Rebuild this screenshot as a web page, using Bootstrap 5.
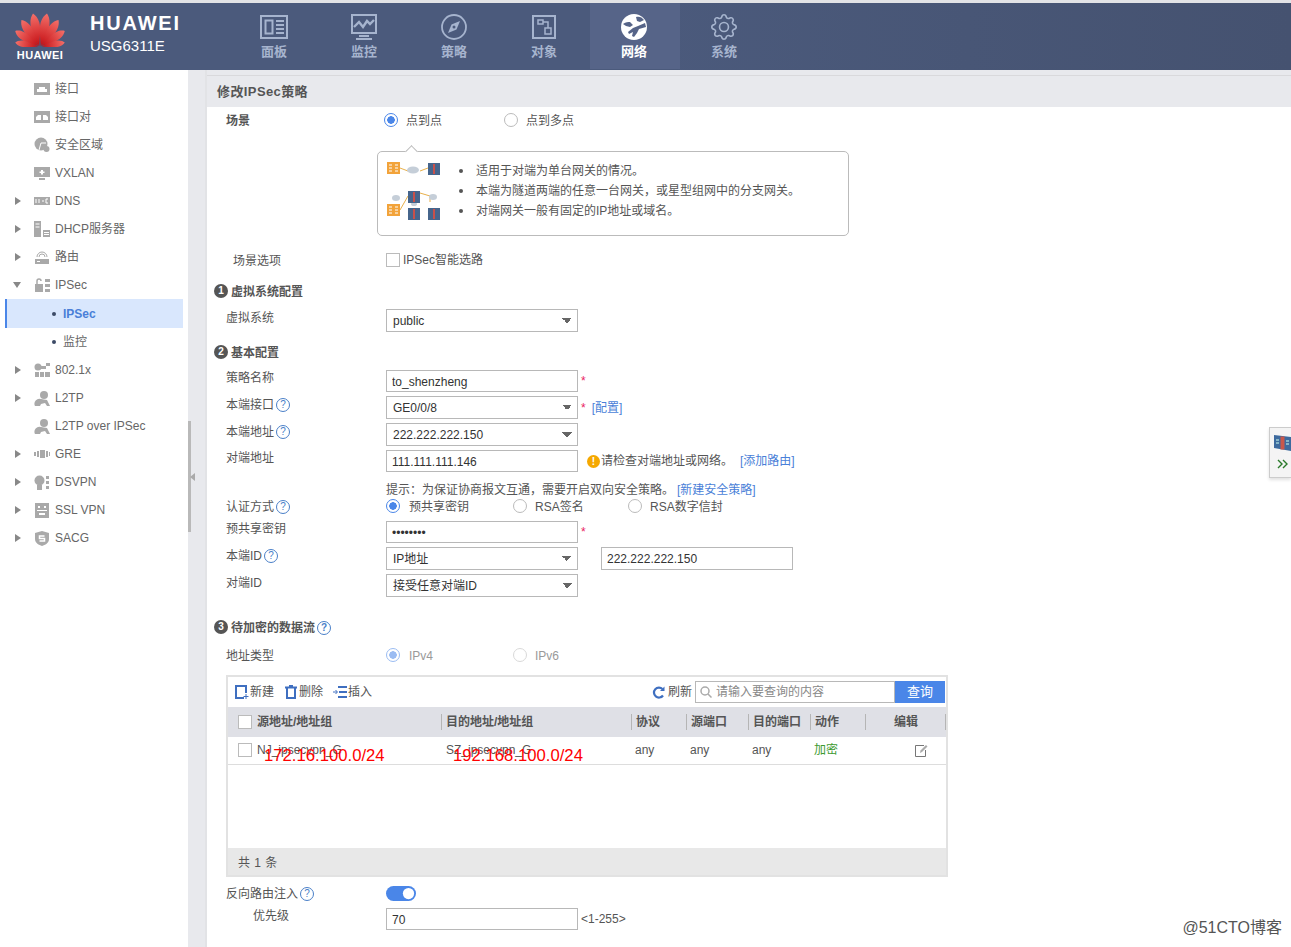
<!DOCTYPE html>
<html lang="zh-CN">
<head>
<meta charset="UTF-8">
<title>USG6311E</title>
<link href="https://cdn.jsdelivr.net/npm/bootstrap@5.3.0/dist/css/bootstrap.min.css" rel="stylesheet">
<style>
html, body { height: 947px; overflow: hidden; }
body { font-family: "Liberation Sans", "Noto Sans CJK SC", sans-serif; font-size: 12px; color: #555; background: #fff; position: relative; }
svg { display: block; flex: none; }

/* top bar */
.topbar { height: 70px; border-top: 3px solid #e2e3e6; background: linear-gradient(90deg, #4b5a7c, #4b5a7c 50%, #455270); }
.brand { width: 230px; padding-left: 10px; }
.logo-box { width: 60px; }
.logo-word { font-size: 11px; font-weight: 700; color: #fff; letter-spacing: .4px; line-height: 11px; margin-top: 3px; }
.brand-name { font-size: 20px; font-weight: 700; color: #fff; letter-spacing: 1.8px; line-height: 22px; margin-top: 9px; }
.brand-model { font-size: 15px; color: #fff; line-height: 20px; margin-top: 2px; }
.brand-text { margin-left: 20px; }
.navcell { width: 90px; height: 66px; color: #a6b4ce; font-size: 13px; font-weight: 700; padding: 11px 2px 0 0; }
.navcell.on { background: #566488; color: #fff; }
.navcell span { margin-top: 4px; line-height: 16px; }
.navicon { height: 26px; }

/* left tree */
.shell { height: 877px; }
.tree { width: 188px; padding-top: 5px; }
.tree ul { margin: 0; padding: 0; list-style: none; }
.titem { height: 28px; padding-left: 15px; display: flex; align-items: center; color: #666; }
.tarrow { width: 19px; }
.tarrow i { display: block; width: 0; height: 0; border-left: 6px solid #888; border-top: 4.5px solid transparent; border-bottom: 4.5px solid transparent; }
.tarrow i.down { border-top: 6px solid #888; border-bottom: 0; border-left: 4.5px solid transparent; border-right: 4.5px solid transparent; margin-left: -2px; }
.ticon { width: 16px; margin-right: 5px; }
.tchild { padding-left: 52px; }
.tchild::before { content: ""; width: 4px; height: 4px; border-radius: 50%; background: #3c4a66; margin-right: 7px; }
.tchild.on { margin: 0 5px; padding-left: 45px; height: 29px; background: #d9e7fd; border-left: 2px solid #4a86e8; color: #4a7fd8; font-weight: 700; }
.gutter { width: 17px; background: #e8e9ed; position: relative; }
.gutter-bar { position: absolute; left: 0; top: 351px; width: 3px; height: 111px; background: #b9b9b9; }
.gutter-tip { position: absolute; left: 2px; top: 403px; border-right: 5px solid #aaa; border-top: 4px solid transparent; border-bottom: 4px solid transparent; }

/* main form */
.mainpane { border-left: 2px solid #e2e3e6; background: linear-gradient(#e8e9ed 5px, #fff 5px); flex: 1; padding-top: 5px; min-width: 0; }
.panehead { height: 32px; background: #e8e9ed; border-top: 1px solid #d9d9dc; padding-left: 10px; font-size: 13px; font-weight: 700; color: #555; letter-spacing: .4px; }
.frow { display: flex; align-items: center; padding-left: 19px; height: 23px; margin-top: 4px; }
.flabel { width: 160px; flex: none; display: flex; align-items: center; gap: 2px; padding-top: 2px; }
.flabel.lift { margin-bottom: 8px; }
.h16 { height: 16px; } .h18 { height: 18px; } .h20 { height: 20px; } .h22 { height: 22px; }
.m1 { margin-top: 1px; } .m3 { margin-top: 3px; } .m6 { margin-top: 6px; } .m7 { margin-top: 7px; } .m8 { margin-top: 8px; } .m9 { margin-top: 9px; } .m10 { margin-top: 10px; } .m12 { margin-top: 12px; } .m15 { margin-top: 15px; } .m20 { margin-top: 20px; }
.secrow { padding-left: 7px; padding-top: 2px; height: 20px; font-weight: 700; color: #555; }
.secnum { width: 14px; height: 14px; border-radius: 50%; background: #555; color: #fff; font-size: 10px; line-height: 14px; text-align: center; margin: -2px 3px 0 0; flex: none; }
.helpq { width: 14px; height: 14px; border: 1px solid #4a7fc8; border-radius: 50%; color: #4a7fc8; font-size: 10px; line-height: 12px; text-align: center; flex: none; }
.sechelp { margin-left: 2px; }
.boldlab { font-weight: 700; }
.indent7 { padding-left: 7px; }
.indent27 { padding-left: 27px; }

.form-control.fbox, .form-select.fbox { width: 192px; height: 100%; min-height: 0; flex: none; border: 1px solid #b8b8b8; border-radius: 0; font-size: 12px; color: #333; padding: 1px 5px 0; box-shadow: none; }
.form-select.fbox { padding: 0 6px; background-image: linear-gradient(45deg, transparent 50%, #666 50%), linear-gradient(135deg, #666 50%, transparent 50%); background-size: 5px 5px, 5px 5px; background-position: right 10px center, right 5px center; background-repeat: no-repeat; }
.form-control.fbox.second { margin-left: 23px; }
.req { color: #e91e63; margin: 0 6px 0 3px; }
.lnk { color: #4a7fd8; text-decoration: none; }
.lnk.after-warn { margin-left: 7px; }
.lnk.after-hint { margin-left: 3px; }
.warnico { width: 13px; height: 13px; border-radius: 50%; background: #f5a800; color: #fff; font-weight: 700; font-size: 10px; line-height: 13px; text-align: center; margin: 0 1px 0 9px; flex: none; }
.hinttext { padding-top: 2px; }
.rng { margin-left: 3px; font-size: 12px; color: #555; }

.rdo { display: inline-flex; align-items: center; gap: 8px; padding-top: 2px; }
.rdo .form-check-input { width: 14px; height: 14px; margin: -2px 0 0; border: 1px solid #bbb; background-color: #fff; background-image: none; flex: none; box-shadow: none; }
.rdo .form-check-input:checked { border-color: #4a86e8; background-image: radial-gradient(circle, #4a86e8 0, #4a86e8 3.5px, #fff 4px); }
.rdo .form-check-input:disabled { opacity: .55; }
.w120 { width: 120px; } .w127 { width: 127px; gap: 9px; } .w115 { width: 115px; }
.scene-radios { margin-left: -2px; }
.dim { color: #999; }
.form-check-input.chkbox { width: 14px; height: 14px; margin: 0 3px 0 0; border: 1px solid #bbb; border-radius: 0; flex: none; box-shadow: none; }

.tipbox { margin: 21px 0 0 170px; width: 472px; height: 85px; border: 1px solid #bbb; border-radius: 5px; position: relative; padding: 8px 0 0 9px; }
.tipbox::before { content: ""; position: absolute; left: 29px; top: -5px; width: 9px; height: 9px; background: #fff; border-left: 1px solid #bbb; border-top: 1px solid #bbb; transform: rotate(45deg); }
.tipbox ul { margin: 1px 0 0 18px; padding: 0; list-style: none; }
.tipbox li { line-height: 20px; color: #555; padding-left: 17px; position: relative; }
.tipbox li::before { content: ""; position: absolute; left: 0; top: 8px; width: 4px; height: 4px; border-radius: 50%; background: #555; }

/* data flow table */
.flowbox { margin: 10px 0 0 19px; width: 722px; height: 202px; border: 2px solid #e2e2e2; display: flex; flex-direction: column; }
.flowtools { height: 30px; padding: 0 1px 0 7px; flex: none; }
.tbtn { display: inline-flex; align-items: center; gap: 1px; margin-right: 10px; color: #555; }
.tbtn.refresh { margin: 0 3px 0 auto; gap: 3px; }
.searchbox { width: 200px; height: 22px; border: 1px solid #b8b8b8; display: flex; align-items: center; gap: 4px; padding-left: 4px; color: #888; }
.querybtn { width: 50px; height: 22px; padding: 0; border: 0; border-radius: 0; background: #4a86e8; color: #fff; font-size: 13px; }
.flowtable { width: 718px; table-layout: fixed; margin: 0; flex: none; }
.flowtable th, .flowtable td { padding: 0 0 0 5px; vertical-align: middle; font-size: 12px; color: #555; box-shadow: none; }
.flowtable th { height: 30px; background: #dfe0e6; border: 0; position: relative; }
.flowtable th + th::before { content: ""; position: absolute; left: 0; top: 7px; height: 16px; width: 1px; background: #b5b5b5; }
.flowtable td { height: 27px; border-bottom: 1px solid #ddd; }
.flowtable td:nth-child(n+3) { padding-left: 4px; }
.flowtable .firstcell { padding-left: 10px; }
.flowtable th.lastcell { text-align: center; padding-right: 4px; }
.flowtable th.lastcell::after { content: ""; position: absolute; right: 0; top: 7px; height: 16px; width: 1px; background: #b5b5b5; }
.flowtable td.enc { color: #3d9a2f; }
.form-check-input.chkbox.cellchk { margin: 0 5px 0 0; }
.cw1 { width: 213px; } .cw2 { width: 190px; } .cw3 { width: 55px; } .cw4 { width: 62px; } .cw5 { width: 81px; }
.editico { margin-left: 46px; }
.redmark { position: absolute; color: #f00; font-size: 16.700px; line-height: 20px; white-space: nowrap; }
.redmark.a { left: 264px; top: 746px; }
.redmark.b { left: 453px; top: 746px; }
.flowfoot { margin-top: auto; height: 27px; background: #e8e8e8; padding: 2px 0 0 10px; letter-spacing: .5px; flex: none; }
.form-switch .form-check-input.swt { width: 30px; height: 15px; margin: 0; background-color: #4a86e8; border: 0; box-shadow: none; }

/* right side dock + watermark */
.dock { position: absolute; right: 0; top: 427px; width: 22px; height: 51px; background: #f4f4f4; border: 1px solid #ccc; border-right: 0; box-shadow: 0 2px 3px rgba(0,0,0,.12); padding: 7px 0 0 4px; }
.dock-arrows { margin: 8px 0 0 3px; }
.watermark { position: absolute; right: 9px; top: 917px; font-size: 16px; line-height: 22px; color: #555; background: rgba(255,255,255,.7); }
</style>
</head>
<body>

<header class="topbar d-flex">
  <div class="brand d-flex">
    <div class="logo-box d-flex flex-column align-items-center">
      <svg width="50" height="36" viewBox="0 0 50 36" class="mt-2">
        <defs><linearGradient id="petal" x1="0" y1="0" x2="0" y2="1"><stop offset="0" stop-color="#f4706a"/><stop offset="1" stop-color="#c40d12"/></linearGradient></defs>
        <g fill="url(#petal)">
          <path transform="translate(24.300 35) rotate(-11)" d="M0 0C-2-8-5-17-4.500-23C-4-28-2-31 0-33C2-31 4-28 4.500-23C5-17 2-8 0 0Z"/>
          <path transform="translate(25.700 35) rotate(11)" d="M0 0C-2-8-5-17-4.500-23C-4-28-2-31 0-33C2-31 4-28 4.500-23C5-17 2-8 0 0Z"/>
          <path transform="translate(24 35) rotate(-34) scale(.95)" d="M0 0C-2-8-5-17-4.500-23C-4-28-2-31 0-33C2-31 4-28 4.500-23C5-17 2-8 0 0Z"/>
          <path transform="translate(26 35) rotate(34) scale(.95)" d="M0 0C-2-8-5-17-4.500-23C-4-28-2-31 0-33C2-31 4-28 4.500-23C5-17 2-8 0 0Z"/>
          <path transform="translate(23.500 35) rotate(-57) scale(.84)" d="M0 0C-2-8-5-17-4.500-23C-4-28-2-31 0-33C2-31 4-28 4.500-23C5-17 2-8 0 0Z"/>
          <path transform="translate(26.500 35) rotate(57) scale(.84)" d="M0 0C-2-8-5-17-4.500-23C-4-28-2-31 0-33C2-31 4-28 4.500-23C5-17 2-8 0 0Z"/>
          <path transform="translate(23 35.500) rotate(-80) scale(.7)" d="M0 0C-2-8-5-17-4.500-23C-4-28-2-31 0-33C2-31 4-28 4.500-23C5-17 2-8 0 0Z"/>
          <path transform="translate(27 35.500) rotate(80) scale(.7)" d="M0 0C-2-8-5-17-4.500-23C-4-28-2-31 0-33C2-31 4-28 4.500-23C5-17 2-8 0 0Z"/>
        </g>
      </svg>
      <div class="logo-word">HUAWEI</div>
    </div>
    <div class="brand-text">
      <div class="brand-name">HUAWEI</div>
      <div class="brand-model">USG6311E</div>
    </div>
  </div>
  <nav class="d-flex">
    <div class="navcell d-flex flex-column align-items-center">
      <svg class="navicon" width="28" height="26" viewBox="0 0 28 26" fill="none" stroke="#a6b4ce" stroke-width="2"><rect x="1" y="2" width="26" height="22"/><rect x="5.500" y="6.500" width="7" height="13"/><path d="M16 7h8M16 11h8M16 15h8M16 19h8"/></svg>
      <span>面板</span>
    </div>
    <div class="navcell d-flex flex-column align-items-center">
      <svg class="navicon" width="28" height="26" viewBox="0 0 28 26" fill="none" stroke="#a6b4ce" stroke-width="2"><rect x="2" y="1" width="24" height="18"/><path d="M4 13l5-5 4 5 4-6 3 3 4-4" stroke-width="2.400"/><path d="M9 22h10M6 25h16"/></svg>
      <span>监控</span>
    </div>
    <div class="navcell d-flex flex-column align-items-center">
      <svg class="navicon" width="26" height="26" viewBox="0 0 26 26" fill="none" stroke="#a6b4ce" stroke-width="1.800"><circle cx="13" cy="13" r="12"/><path d="M19 7l-8.500 3.500L7 19l8.500-3.500Z" fill="#a6b4ce" stroke="none"/><circle cx="13" cy="13" r="1.500" fill="#4b5a7c" stroke="none"/></svg>
      <span>策略</span>
    </div>
    <div class="navcell d-flex flex-column align-items-center">
      <svg class="navicon" width="26" height="26" viewBox="0 0 26 26" fill="none" stroke="#a6b4ce" stroke-width="2"><rect x="2" y="2" width="22" height="22"/><rect x="7" y="6" width="5" height="4" stroke-width="1.500"/><rect x="14" y="14" width="6" height="6" stroke-width="1.500"/><path d="M12 8h5v6" stroke-width="1.500"/></svg>
      <span>对象</span>
    </div>
    <div class="navcell on d-flex flex-column align-items-center">
      <svg class="navicon" width="26" height="26" viewBox="0 0 26 26"><circle cx="13" cy="13" r="13" fill="#fff"/><path d="M2 10c3-2 5-2 7-2l3 3-3 2-4-1ZM15 3c3-1 6 0 8 3l-4 2-3-1ZM7 18l5-4 5-2 7-3 1 4-7 2-2 4-3 4-2-1 1-4-4 2Z" fill="#566488"/></svg>
      <span>网络</span>
    </div>
    <div class="navcell d-flex flex-column align-items-center">
      <svg class="navicon" width="26" height="26" viewBox="0 0 16 16" fill="#a6b4ce"><path d="M8 4.754a3.246 3.246 0 1 0 0 6.492 3.246 3.246 0 0 0 0-6.492zM5.754 8a2.246 2.246 0 1 1 4.492 0 2.246 2.246 0 0 1-4.492 0z"/><path d="M9.796 1.343c-.527-1.790-3.065-1.790-3.592 0l-.094.319a.873.873 0 0 1-1.255.520l-.292-.160c-1.640-.892-3.433.902-2.540 2.541l.159.292a.873.873 0 0 1-.520 1.255l-.319.094c-1.790.527-1.790 3.065 0 3.592l.319.094a.873.873 0 0 1 .520 1.255l-.160.292c-.892 1.640.901 3.434 2.541 2.540l.292-.159a.873.873 0 0 1 1.255.520l.094.319c.527 1.790 3.065 1.790 3.592 0l.094-.319a.873.873 0 0 1 1.255-.520l.292.160c1.640.893 3.434-.902 2.540-2.541l-.159-.292a.873.873 0 0 1 .520-1.255l.319-.094c1.790-.527 1.790-3.065 0-3.592l-.319-.094a.873.873 0 0 1-.520-1.255l.160-.292c.893-1.640-.902-3.433-2.541-2.540l-.292.159a.873.873 0 0 1-1.255-.520l-.094-.319zm-2.633.283c.246-.835 1.428-.835 1.674 0l.094.319a1.873 1.873 0 0 0 2.693 1.115l.291-.160c.764-.415 1.600.420 1.184 1.185l-.159.292a1.873 1.873 0 0 0 1.116 2.692l.318.094c.835.246.835 1.428 0 1.674l-.319.094a1.873 1.873 0 0 0-1.115 2.693l.160.291c.415.764-.420 1.600-1.185 1.184l-.291-.159a1.873 1.873 0 0 0-2.693 1.116l-.094.318c-.246.835-1.428.835-1.674 0l-.094-.319a1.873 1.873 0 0 0-2.692-1.115l-.292.160c-.764.415-1.600-.420-1.184-1.185l.159-.291A1.873 1.873 0 0 0 1.945 8.930l-.319-.094c-.835-.246-.835-1.428 0-1.674l.319-.094A1.873 1.873 0 0 0 3.060 4.377l-.160-.292c-.415-.764.420-1.600 1.185-1.184l.292.159a1.873 1.873 0 0 0 2.692-1.115l.094-.319z"/></svg>
      <span>系统</span>
    </div>
  </nav>
</header>

<div class="shell d-flex">
  <aside class="tree">
    <ul>
      <li class="titem"><span class="tarrow"></span><svg class="ticon" width="16" height="12" viewBox="0 0 16 12"><path fill="#a9a9a9" d="M0 0h16v12H0Z"/><path fill="#fff" d="M3 9V6h2V4h6v2h2v3Z"/></svg>接口</li>
      <li class="titem"><span class="tarrow"></span><svg class="ticon" width="16" height="12" viewBox="0 0 16 12"><path fill="#a9a9a9" d="M0 0h16v12H0Z"/><path fill="#fff" d="M2 9V6l2-2h3v5ZM9 9V4h3l2 2v3Z"/></svg>接口对</li>
      <li class="titem"><span class="tarrow"></span><svg class="ticon" width="16" height="16" viewBox="0 0 16 16"><circle cx="7" cy="7" r="6.500" fill="#a9a9a9"/><path d="M5 13l2-7h5" fill="none" stroke="#fff"/><circle cx="12.500" cy="12" r="3" fill="#a9a9a9"/></svg>安全区域</li>
      <li class="titem"><span class="tarrow"></span><svg class="ticon" width="16" height="13" viewBox="0 0 16 13"><path fill="#a9a9a9" d="M0 0h16v10H0ZM5 11h6v2H5Z"/><path fill="#fff" d="M7 3h2v1.500h1.500v1.500H9v1.500H7V6H5.500V4.500H7Z"/></svg>VXLAN</li>
      <li class="titem"><span class="tarrow"><i></i></span><svg class="ticon" width="16" height="8" viewBox="0 0 16 8"><path fill="#a9a9a9" d="M0 0h16v8H0Z"/><path stroke="#fff" d="M2 2v4M5 2v4M8 4h2M12 2h2M12 6h2M12 2v4" fill="none"/></svg>DNS</li>
      <li class="titem"><span class="tarrow"><i></i></span><svg class="ticon" width="16" height="16" viewBox="0 0 16 16"><path fill="#a9a9a9" d="M0 0h7v16H0ZM9 9h7v7H9Z"/><path stroke="#fff" d="M1.500 3h4M1.500 6h4M10 11.500h5M10 13.500h5"/></svg>DHCP服务器</li>
      <li class="titem"><span class="tarrow"><i></i></span><svg class="ticon" width="16" height="14" viewBox="0 0 16 14"><path fill="#a9a9a9" d="M1 9h14v5H1Z"/><path stroke="#a9a9a9" fill="none" d="M3 7a5 5 0 0 1 10 0M5 7a3 3 0 0 1 6 0"/><path stroke="#fff" d="M3 11.500h3"/></svg>路由</li>
      <li class="titem"><span class="tarrow"><i class="down"></i></span><svg class="ticon" width="16" height="14" viewBox="0 0 16 14"><path fill="#a9a9a9" d="M1 6h8v8H1ZM11 1h5v3h-5ZM11 6h5v3h-5ZM11 11h5v3h-5Z"/><path fill="none" stroke="#a9a9a9" stroke-width="1.500" d="M3 6V3a2 2 0 0 1 4 0"/></svg>IPSec</li>
      <li class="titem tchild on">IPSec</li>
      <li class="titem tchild">监控</li>
      <li class="titem"><span class="tarrow"><i></i></span><svg class="ticon" width="16" height="14" viewBox="0 0 16 14"><circle cx="4" cy="4" r="3.500" fill="#a9a9a9"/><path fill="#a9a9a9" d="M6 3h6v3H6ZM12 0h4v3h-4ZM1 9h4v5H1ZM6 9h4v5H6ZM11 9h5v5h-5Z"/></svg>802.1x</li>
      <li class="titem"><span class="tarrow"><i></i></span><svg class="ticon" width="16" height="15" viewBox="0 0 16 15"><circle cx="10" cy="4" r="4" fill="#a9a9a9"/><path fill="#a9a9a9" d="M1 15a5 5 0 0 1 6-7l6 1 3 6h-3l-2-3-4 1-1 2Z"/></svg>L2TP</li>
      <li class="titem"><span class="tarrow"></span><svg class="ticon" width="16" height="15" viewBox="0 0 16 15"><circle cx="10" cy="4" r="4" fill="#a9a9a9"/><path fill="#a9a9a9" d="M1 15a5 5 0 0 1 6-7l6 1 3 6h-3l-2-3-4 1-1 2Z"/></svg>L2TP over IPSec</li>
      <li class="titem"><span class="tarrow"><i></i></span><svg class="ticon" width="16" height="8" viewBox="0 0 16 8"><path fill="#a9a9a9" d="M0 2h2v4H0ZM3 1h2v6H3ZM6 0h5v8H6ZM12 1h2v6h-2ZM15 2h1v4h-1Z"/></svg>GRE</li>
      <li class="titem"><span class="tarrow"><i></i></span><svg class="ticon" width="16" height="15" viewBox="0 0 16 15"><circle cx="5.500" cy="5.500" r="5" fill="#a9a9a9"/><path fill="#a9a9a9" d="M3 10h5v5H3ZM12 1h3v3h-3ZM12 6h3v3h-3ZM12 11h3v3h-3Z"/></svg>DSVPN</li>
      <li class="titem"><span class="tarrow"><i></i></span><svg class="ticon" width="14" height="15" viewBox="0 0 14 15"><path fill="#a9a9a9" d="M0 0h14v15H0Z"/><path fill="#fff" d="M3 3h2v2H3ZM9 3h2v2H9ZM2 7h10v1H2ZM4 10h6v2H4Z"/></svg>SSL VPN</li>
      <li class="titem"><span class="tarrow"><i></i></span><svg class="ticon" width="14" height="15" viewBox="0 0 14 15"><path fill="#a9a9a9" d="M7 0l7 2v6c0 4-4 6-7 7-3-1-7-3-7-7V2Z"/><path fill="none" stroke="#fff" stroke-width="1.500" d="M9.500 5h-5v2.500h5V10h-5"/></svg>SACG</li>
    </ul>
  </aside>
  <div class="gutter"><div class="gutter-bar"></div><div class="gutter-tip"></div></div>

  <main class="mainpane">
    <div class="panehead d-flex align-items-center">修改IPSec策略</div>

    <div class="frow h20 m3">
      <div class="flabel boldlab">场景</div>
      <div class="scene-radios d-flex">
        <label class="rdo w120"><input class="form-check-input" type="radio" name="scene" checked>点到点</label>
        <label class="rdo"><input class="form-check-input" type="radio" name="scene">点到多点</label>
      </div>
    </div>

    <div class="tipbox d-flex">
      <svg width="54" height="60" viewBox="0 0 54 60">
        <g stroke="#e8b04a" fill="none"><path d="M13 8l8 3M33 11l8-3M13 50l8-14 10-3M33 33l10 3 0 6"/></g>
        <g fill="#c5ced8"><ellipse cx="26" cy="10" rx="6" ry="3.500"/><ellipse cx="9" cy="38" rx="4" ry="3"/><ellipse cx="46" cy="37" rx="4" ry="3"/><ellipse cx="27" cy="44" rx="3" ry="2"/></g>
        <g fill="#f2a33a"><rect x="0" y="2" width="13" height="12"/><rect x="0" y="44" width="13" height="12"/></g>
        <g fill="#46658c"><rect x="41" y="3" width="12" height="12"/><rect x="21" y="31" width="12" height="12"/><rect x="21" y="48" width="12" height="12"/><rect x="41" y="48" width="12" height="12"/></g>
        <path stroke="#fff" d="M2 5h3M2 8h3M2 11h3M8 5h3M8 8h3M8 11h3M2 47h3M2 50h3M2 53h3M8 47h3M8 50h3M8 53h3"/>
        <path stroke="#c8504a" stroke-width="2" d="M47 4v10M27 32v10M27 49v10M47 49v10"/>
      </svg>
      <ul>
        <li>适用于对端为单台网关的情况。</li>
        <li>本端为隧道两端的任意一台网关，或星型组网中的分支网关。</li>
        <li>对端网关一般有固定的IP地址或域名。</li>
      </ul>
    </div>

    <div class="frow h18 m15">
      <div class="flabel indent7">场景选项</div>
      <label class="d-flex align-items-center"><input class="form-check-input chkbox" type="checkbox">IPSec智能选路</label>
    </div>

    <div class="frow secrow m12"><span class="secnum">1</span>虚拟系统配置</div>
    <div class="frow m8">
      <div class="flabel lift">虚拟系统</div>
      <select class="form-select fbox"><option>public</option></select>
    </div>

    <div class="frow secrow m10"><span class="secnum">2</span>基本配置</div>
    <div class="frow h22 m8">
      <div class="flabel lift">策略名称</div>
      <input class="form-control fbox" value="to_shenzheng"><span class="req">*</span>
    </div>
    <div class="frow">
      <div class="flabel lift">本端接口<span class="helpq">?</span></div>
      <select class="form-select fbox"><option>GE0/0/8</option></select><span class="req">*</span><a class="lnk">[配置]</a>
    </div>
    <div class="frow">
      <div class="flabel lift">本端地址<span class="helpq">?</span></div>
      <select class="form-select fbox"><option>222.222.222.150</option></select>
    </div>
    <div class="frow h22">
      <div class="flabel lift">对端地址</div>
      <input class="form-control fbox" value="111.111.111.146"><span class="warnico">!</span><span>请检查对端地址或网络。</span><a class="lnk after-warn">[添加路由]</a>
    </div>
    <div class="frow h16 m9">
      <div class="flabel"></div>
      <span class="hinttext">提示：为保证协商报文互通，需要开启双向安全策略。</span><a class="lnk after-hint hinttext">[新建安全策略]</a>
    </div>
    <div class="frow h16 m1">
      <div class="flabel">认证方式<span class="helpq">?</span></div>
      <label class="rdo w127"><input class="form-check-input" type="radio" name="auth" checked>预共享密钥</label>
      <label class="rdo w115"><input class="form-check-input" type="radio" name="auth">RSA签名</label>
      <label class="rdo"><input class="form-check-input" type="radio" name="auth">RSA数字信封</label>
    </div>
    <div class="frow h22 m7">
      <div class="flabel lift">预共享密钥</div>
      <input class="form-control fbox" type="password" value="password"><span class="req">*</span>
    </div>
    <div class="frow">
      <div class="flabel lift">本端ID<span class="helpq">?</span></div>
      <select class="form-select fbox"><option>IP地址</option></select>
      <input class="form-control fbox second" value="222.222.222.150">
    </div>
    <div class="frow">
      <div class="flabel lift">对端ID</div>
      <select class="form-select fbox"><option>接受任意对端ID</option></select>
    </div>

    <div class="frow secrow m20"><span class="secnum">3</span>待加密的数据流<span class="helpq sechelp">?</span></div>
    <div class="frow h20 m8">
      <div class="flabel">地址类型</div>
      <label class="rdo w127 dim"><input class="form-check-input" type="radio" name="ipv" checked disabled>IPv4</label>
      <label class="rdo dim"><input class="form-check-input" type="radio" name="ipv" disabled>IPv6</label>
    </div>

    <section class="flowbox">
      <div class="flowtools d-flex align-items-center">
        <span class="tbtn"><svg width="14" height="14" viewBox="0 0 14 14" fill="none" stroke="#3f6fc0" stroke-width="2"><path d="M9 13H1V1h10v7"/><path d="M11 9v5M8.500 11.500h5" stroke-width="1"/></svg>新建</span>
        <span class="tbtn"><svg width="14" height="14" viewBox="0 0 14 14" fill="none" stroke="#3f6fc0" stroke-width="2"><path d="M1 2.500h12M5 1h4M3 3v10h8V3"/></svg>删除</span>
        <span class="tbtn"><svg width="14" height="12" viewBox="0 0 14 12" stroke="#3f6fc0" fill="none"><path d="M5 1h9M5 11h9" stroke-width="2"/><path d="M6 6h8" stroke-width="2"/><path d="M0 6h4M2.500 4l2 2-2 2"/></svg>插入</span>
        <span class="tbtn refresh"><svg width="13" height="13" viewBox="0 0 13 13" fill="none" stroke="#3f6fc0" stroke-width="2.200"><path d="M11 9.500A5 5 0 1 1 10.500 3"/><path d="M12.500 0.500v4.500h-4.500z" fill="#3f6fc0" stroke="none"/></svg>刷新</span>
        <div class="searchbox"><svg width="12" height="12" viewBox="0 0 12 12" fill="none" stroke="#aaa" stroke-width="1.500"><circle cx="5" cy="5" r="4"/><path d="M8 8l3.500 3.500"/></svg>请输入要查询的内容</div>
        <button type="button" class="btn querybtn">查询</button>
      </div>
      <table class="table flowtable">
        <colgroup><col class="cw1"><col class="cw2"><col class="cw3"><col class="cw4"><col class="cw4"><col class="cw3"><col class="cw5"></colgroup>
        <thead><tr>
          <th class="firstcell"><div class="d-flex align-items-center"><input class="form-check-input chkbox cellchk" type="checkbox">源地址/地址组</div></th>
          <th>目的地址/地址组</th><th>协议</th><th>源端口</th><th>目的端口</th><th>动作</th><th class="lastcell">编辑</th>
        </tr></thead>
        <tbody><tr>
          <td class="firstcell"><div class="d-flex align-items-center"><input class="form-check-input chkbox cellchk" type="checkbox">NJ_ipsecvpn_G</div></td>
          <td>SZ_ipsecvpn_G</td><td>any</td><td>any</td><td>any</td><td class="enc">加密</td>
          <td><svg class="editico" width="13" height="13" viewBox="0 0 13 13" fill="none" stroke="#777"><path d="M9 1.500H.5v11h10V6"/><path d="M5 9l.5-2.500L11 1l1.500 1.500L7 8Z" fill="#aaa" stroke="none"/></svg></td>
        </tr></tbody>
      </table>
      <div class="flowfoot d-flex align-items-center">共 1 条</div>
    </section>

    <div class="frow h18 m7">
      <div class="flabel">反向路由注入<span class="helpq">?</span></div>
      <div class="form-check form-switch m-0 p-0 d-flex align-items-center"><input class="form-check-input swt" type="checkbox" role="switch" checked></div>
    </div>
    <div class="frow h22 m6">
      <div class="flabel lift indent27">优先级</div>
      <input class="form-control fbox" value="70"><span class="rng">&lt;1-255&gt;</span>
    </div>
  </main>
</div>

<div class="redmark a">172.16.100.0/24</div>
<div class="redmark b">192.168.100.0/24</div>

<div class="dock">
  <svg width="17" height="16" viewBox="0 0 17 16"><path fill="#3d6a9e" d="M0 0l17 2v14L0 13Z"/><path fill="#c9574a" d="M6.500 1.500h4v13h-4Z"/><path stroke="#cfe" d="M2 5h3M2 8h3M12 6h3M12 9h3"/></svg>
  <svg class="dock-arrows" width="11" height="10" viewBox="0 0 11 10" fill="none" stroke="#2a7a2a" stroke-width="1.400"><path d="M1 1l4 4-4 4M6 1l4 4-4 4"/></svg>
</div>
<div class="watermark">@51CTO博客</div>

</body>
</html>
